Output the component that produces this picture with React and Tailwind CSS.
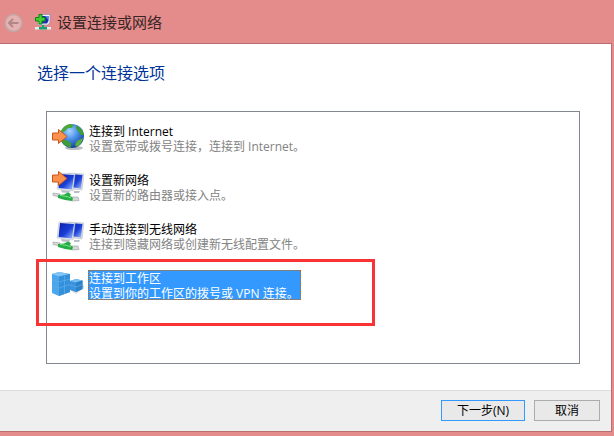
import { useState } from 'react'

const Arrow = ({ y }) => (
  <path
    transform={`translate(0 ${y})`}
    d="M0.500 4 H6.500 V0.500 L15 7.500 L6.500 14.500 V11 H0.500 Z"
    fill="#fb914c"
    stroke="#c8561c"
  />
)

const Globe = () => (
  <svg viewBox="0 0 32 32" className="w-8 h-8" aria-hidden="true">
    <defs>
      <radialGradient id="sea" cx="0.4" cy="0.3" r="0.75">
        <stop offset="0" stopColor="#a8d6ff" />
        <stop offset="0.45" stopColor="#4a90e8" />
        <stop offset="1" stopColor="#12378f" />
      </radialGradient>
    </defs>
    <ellipse cx="22" cy="26" rx="9" ry="2" fill="#b9bcc0" />
    <circle cx="20" cy="14" r="12" fill="url(#sea)" />
    <path d="M9 9 Q12 3 18 2 L22 3 L20 6 L16 6 L13 9 L10 11 Z" fill="#4aa83a" />
    <path d="M25 3.500 Q31 7 32 13 L29 13 L26 9 L24 6 Z" fill="#3f9d35" />
    <path d="M9 18 L14 18 L19 21 L19 25.500 Q12 25 9 18 Z" fill="#3f9d35" />
    <path d="M25 19 L31 16 Q30 22 25 25 L23 23 Z" fill="#57b23f" />
    <Arrow y={7} />
  </svg>
)

const Computers = ({ arrow }) => (
  <svg viewBox="0 0 32 32" className="w-8 h-8" aria-hidden="true">
    <defs>
      <linearGradient id="screen" x1="0" y1="0" x2="1" y2="1">
        <stop offset="0" stopColor="#0a1fa8" />
        <stop offset="0.55" stopColor="#1a3fd8" />
        <stop offset="1" stopColor="#a8c8ff" />
      </linearGradient>
    </defs>
    <path d="M16 2 L32 3 L30 19 L20 18 Z" fill="#dadde4" stroke="#b4b8c2" strokeWidth="0.500" />
    <path d="M18 3 L30.500 4 L29 17.500 L18 16 Z" fill="url(#screen)" />
    <path d="M7 2 L23 3 L21 20 L5 18 Z" fill="#e6e8ee" stroke="#b4b8c2" strokeWidth="0.500" />
    <path d="M8 3 L22 4 L20 18.500 L6.500 17 Z" fill="url(#screen)" />
    <path d="M9 19 L18 20 L17 22 L10 21.500 Z M22 20 H28 L27 22 H22 Z" fill="#b9bdc5" />
    <path d="M1 22 L8 23 L8 26 L1 24.500 Z M19 26 L26 26 L27 29.500 L20 30 Z" fill="#d6d8d9" stroke="#a3a6a8" strokeWidth="0.700" />
    <path d="M6 24 L12 23.500 L16 21.500 L19 23 L18 25 L21 27 L20 30 L13 29 L6 27 Z" fill="#22ad45" />
    <path d="M8 24.500 L15 25.500 L19 27" stroke="#7be08d" fill="none" />
    {arrow && <Arrow y={0} />}
  </svg>
)

const Workplace = () => (
  <svg viewBox="0 0 32 32" className="w-8 h-8" aria-hidden="true">
    <path d="M18 21 L24 25 L32 19 V16 Z" fill="#dddddd" />
    <path d="M18 12 L24 10 L30.500 11.500 V20 L24 23 L18 21 Z" fill="#3c93db" />
    <path d="M18 12 L24 10 L30.500 11.500 L24 13.500 Z" fill="#79bff2" />
    <path d="M24 13.500 L30.500 11.500 V20 L24 23 Z" fill="#2c82ca" />
    <path d="M0 5 L7 3 L18 5 V23 L7 27 L0 24 Z" fill="#4ba6ea" />
    <path d="M0 5 L7 3 L18 5 L7 7.500 Z" fill="#82c5f5" />
    <path d="M7 7.500 L18 5 V23 L7 27 Z" fill="#3590dc" />
    <path d="M0 11 L7 13 L18 10 M0 17 L7 19 L18 15.500 M12.500 6.500 V25 M18 16 L24 18 L30.500 15.500" stroke="#5eaeea" strokeWidth="0.700" fill="none" />
  </svg>
)

const TitleIcon = () => (
  <svg viewBox="0 0 16 16" className="w-4 h-4" aria-hidden="true">
    <path d="M4 0.500 H15 V8 L13 11 H3 V5 Z" fill="#f3f4fb" stroke="#8a93b5" strokeWidth="0.700" />
    <path d="M6 2 H13.500 V7 L12 9.500 H5 Z" fill="#1a2fb4" />
    <path d="M10 2 H13.500 V6 Z" fill="#5f8be8" />
    <path d="M7 11 H9 V13 H7 Z" fill="#17a070" />
    <path d="M0 13 H16 V15.500 H0 Z" fill="#e8eeee" />
    <path d="M4 13 H12 V15.500 H4 Z" fill="#17a070" />
    <path d="M4 0.500 H7 V3.500 H10 V7 H7 V10 H4 V7 H0.500 V3.500 H4 Z" fill="#42d12e" stroke="#128012" />
  </svg>
)

const options = [
  { title: '连接到 Internet', text: '设置宽带或拨号连接，连接到 Internet。', icon: <Globe /> },
  { title: '设置新网络', text: '设置新的路由器或接入点。', icon: <Computers arrow /> },
  { title: '手动连接到无线网络', text: '连接到隐藏网络或创建新无线配置文件。', icon: <Computers /> },
  { title: '连接到工作区', text: '设置到你的工作区的拨号或 VPN 连接。', icon: <Workplace />, marked: true },
]

const App = () => {
  const [selected, setSelected] = useState(3)

  return (
    <div className="min-h-screen flex flex-col bg-[#e48b8b] pr-0.5 pb-1 text-xs text-black font-['Open_Sans','Noto_Sans_CJK_SC',sans-serif]">

      {/* Title bar */}
      <header className="flex items-center h-[43px] pl-1">
        <button aria-label="后退" className="w-5 h-5">
          <svg viewBox="0 0 20 20" className="w-5 h-5" fill="none">
            <circle cx="9.500" cy="11" r="8.500" fill="#e6b1b1" stroke="#c3a5a5" strokeWidth="1.500" />
            <path d="M14.500 11 H5 M9 7 L5 11 L9 15" stroke="#b08888" strokeWidth="2" />
          </svg>
        </button>
        <div className="flex items-center gap-1.5 ml-[11px]">
          <TitleIcon />
          <h1 className="text-[15px] leading-5 text-[#3a2626]">设置连接或网络</h1>
        </div>
      </header>

      <div className="flex-1 flex flex-col bg-white border-y border-r border-[#b96f72]">

        <main className="flex-1 flex flex-col pl-[46px] pr-[31px] pb-[26px]">
          <h2 className="-ml-[9px] pt-[17px] pb-[26px] text-base leading-6 text-[#003399]">选择一个连接选项</h2>

          <div role="listbox" aria-label="选择一个连接选项" className="flex-1 flex flex-col gap-[17px] border border-[#828790] pl-[5px] pt-2.5">
            {options.map((option, i) => (
              <div key={option.title} className="relative flex">
                <button
                  role="option"
                  aria-selected={selected === i}
                  onClick={() => setSelected(i)}
                  className="flex items-center gap-1 text-left leading-[15px]"
                >
                  {option.icon}
                  <span className={`flex flex-col h-[30px] pr-px border border-dotted ${selected === i ? 'bg-[#3399ff] text-white border-[#cc6600]' : 'border-transparent'}`}>
                    <span>{option.title}</span>
                    <span className={selected === i ? 'text-white' : 'text-[#838383]'}>{option.text}</span>
                  </span>
                </button>
                {option.marked && (
                  <div className="absolute -left-4 -top-[10px] w-[339px] h-[67px] border-3 border-[#fa3434] pointer-events-none" />
                )}
              </div>
            ))}
          </div>
        </main>

        {/* Footer buttons */}
        <footer className="flex justify-end gap-[9px] bg-[#efefef] border-t border-[#dddddd] pt-[9px] pb-2.5 pr-[11px]">
          <button className="w-[84px] h-[21px] flex items-center justify-center bg-[#e9e9e9] border border-[#3399ff]">下一步(N)</button>
          <button className="w-[66px] h-[21px] flex items-center justify-center bg-[#e9e9e9] border border-[#acacac]">取消</button>
        </footer>
      </div>

    </div>
  )
}

export default App
